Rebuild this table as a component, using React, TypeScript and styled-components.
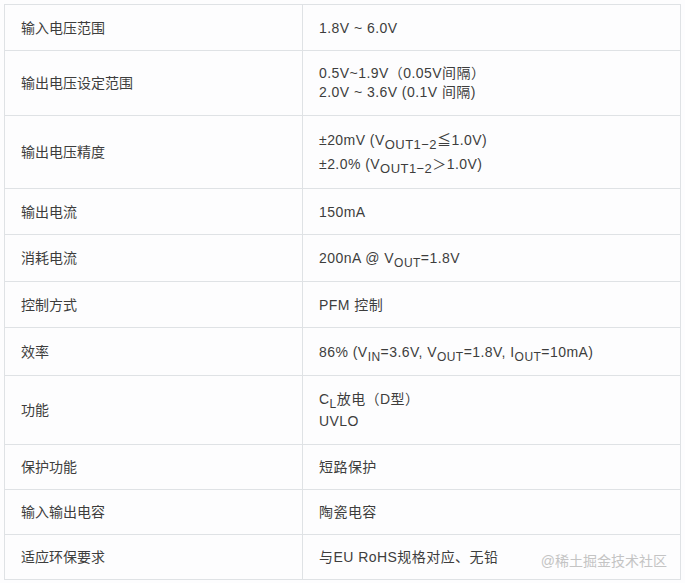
import * as React from 'react'
import styled, { createGlobalStyle } from 'styled-components'

const GlobalStyle = createGlobalStyle`
  body {
    margin: 0;
    background: #fdfdfe;
    font-family: "Liberation Sans", "Noto Sans CJK SC", sans-serif;
  }
`

const Wrapper = styled.div`
  position: relative;
  padding: 4px;
  width: 677px;
`

const Table = styled.table`
  width: 677px;
  border-collapse: collapse;
  font-size: 14px;
  color: #3d3d3d;
`

const Row = styled.tr<{ $h: number }>`
  height: ${props => props.$h}px;
`

const Cell = styled.td<{ $lh?: number }>`
  border: 1px solid #dfe2e5;
  padding: 0 16px;
  line-height: ${props => props.$lh ?? 20}px;
  vertical-align: middle;
  &:first-child {
    width: 265px;
  }
  &:last-child {
    letter-spacing: 0.45px;
  }
`

const Sub = styled.sub<{ $size?: number }>`
  font-size: ${props => props.$size ?? 12}px;
  line-height: 0;
  vertical-align: -4px;
`

const Watermark = styled.div`
  position: absolute;
  right: 18px;
  bottom: 14px;
  font-size: 14px;
  color: #c4c4c4;
`

const Vout12 = () => <>V<Sub $size={13}>OUT1−2</Sub></>

export default function App() {
  return (
    <Wrapper>
      <GlobalStyle />
      <Table>
        <tbody>
          <Row $h={46}>
            <Cell>输入电压范围</Cell>
            <Cell>1.8V ~ 6.0V</Cell>
          </Row>
          <Row $h={65}>
            <Cell>输出电压设定范围</Cell>
            <Cell $lh={19}>0.5V~1.9V（0.05V间隔）<br />2.0V ~ 3.6V (0.1V 间隔)</Cell>
          </Row>
          <Row $h={73}>
            <Cell>输出电压精度</Cell>
            <Cell $lh={24}>±20mV (<Vout12 />≦1.0V)<br />±2.0% (<Vout12 />＞1.0V)</Cell>
          </Row>
          <Row $h={46}>
            <Cell>输出电流</Cell>
            <Cell>150mA</Cell>
          </Row>
          <Row $h={47}>
            <Cell>消耗电流</Cell>
            <Cell>200nA @ V<Sub>OUT</Sub>=1.8V</Cell>
          </Row>
          <Row $h={46}>
            <Cell>控制方式</Cell>
            <Cell>PFM 控制</Cell>
          </Row>
          <Row $h={48}>
            <Cell>效率</Cell>
            <Cell>86% (V<Sub>IN</Sub>=3.6V, V<Sub>OUT</Sub>=1.8V, I<Sub>OUT</Sub>=10mA)</Cell>
          </Row>
          <Row $h={69}>
            <Cell>功能</Cell>
            <Cell $lh={22}>C<Sub>L</Sub>放电（D型）<br />UVLO</Cell>
          </Row>
          <Row $h={45}>
            <Cell>保护功能</Cell>
            <Cell>短路保护</Cell>
          </Row>
          <Row $h={45}>
            <Cell>输入输出电容</Cell>
            <Cell>陶瓷电容</Cell>
          </Row>
          <Row $h={45}>
            <Cell>适应环保要求</Cell>
            <Cell>与EU RoHS规格对应、无铅</Cell>
          </Row>
        </tbody>
      </Table>
      <Watermark>@稀土掘金技术社区</Watermark>
    </Wrapper>
  )
}
